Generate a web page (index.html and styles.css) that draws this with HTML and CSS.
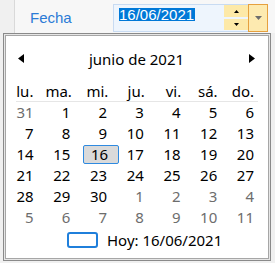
FILE: index.html
```html
<!DOCTYPE html>
<html lang="es">
<head>
<meta charset="utf-8">
<link rel="stylesheet" href="styles.css">
</head>
<body>
<div class="page">
  <div class="topbar">
    <span class="label">Fecha</span>
    <div class="picker">
      <span class="value">16/06/2021</span>
      <div class="spin">
        <div class="spin-btn"><svg width="5" height="3" viewBox="0 0 5 3"><path d="M0 3 L2.5 0 L5 3 Z" fill="#000"/></svg></div>
        <div class="spin-btn"><svg width="5" height="3" viewBox="0 0 5 3"><path d="M0 0 L5 0 L2.5 3 Z" fill="#000"/></svg></div>
      </div>
      <div class="drop"><svg width="7" height="4" viewBox="0 0 7 4"><path d="M0 0 L7 0 L3.5 4 Z" fill="#6d6d6d"/></svg></div>
    </div>
  </div>
  <div class="popup">
    <div class="inner">
      <div class="header">
        <svg class="arrow" width="6" height="9" viewBox="0 0 6 9"><path d="M6 0 L6 9 L0 4.5 Z" fill="#000"/></svg>
        <span class="title">junio de 2021</span>
        <svg class="arrow" width="6" height="9" viewBox="0 0 6 9"><path d="M0 0 L0 9 L6 4.5 Z" fill="#000"/></svg>
      </div>
      <div class="grid names">
        <span class="cell">lu.</span><span class="cell">ma.</span><span class="cell">mi.</span><span class="cell">ju.</span><span class="cell">vi.</span><span class="cell">sá.</span><span class="cell">do.</span>
      </div>
      <div class="sep"></div>
      <div class="grid days">
        <span class="cell other">31</span><span class="cell">1</span><span class="cell">2</span><span class="cell">3</span><span class="cell">4</span><span class="cell">5</span><span class="cell">6</span>
        <span class="cell">7</span><span class="cell">8</span><span class="cell">9</span><span class="cell">10</span><span class="cell">11</span><span class="cell">12</span><span class="cell">13</span>
        <span class="cell">14</span><span class="cell">15</span><span class="cell selected">16</span><span class="cell">17</span><span class="cell">18</span><span class="cell">19</span><span class="cell">20</span>
        <span class="cell">21</span><span class="cell">22</span><span class="cell">23</span><span class="cell">24</span><span class="cell">25</span><span class="cell">26</span><span class="cell">27</span>
        <span class="cell">28</span><span class="cell">29</span><span class="cell">30</span><span class="cell other">1</span><span class="cell other">2</span><span class="cell other">3</span><span class="cell other">4</span>
        <span class="cell other">5</span><span class="cell other">6</span><span class="cell other">7</span><span class="cell other">8</span><span class="cell other">9</span><span class="cell other">10</span><span class="cell other">11</span>
      </div>
      <div class="today">
        <span class="today-box"></span>
        <span class="today-text">Hoy: 16/06/2021</span>
      </div>
    </div>
  </div>
</div>
</body>
</html>
```

FILE: styles.css
```css
* { box-sizing: border-box; }
html, body { margin: 0; padding: 0; }
body {
  width: 275px;
  height: 263px;
  overflow: hidden;
  background: #f0f0f0;
  font-family: "Noto Sans", sans-serif;
  color: #000;
}
.page { height: 263px; }

.topbar {
  height: 33px;
  margin-left: 14px;
  border-left: 1px solid #d9d9d9;
  background: #f7f7f7;
  display: flex;
  align-items: flex-start;
}
.label {
  width: 98px;
  padding-left: 15px;
  margin-top: 9px;
  font-family: "Liberation Sans", Arial, sans-serif;
  font-size: 15px;
  line-height: 17px;
  color: #2b7bd6;
}
.picker {
  margin-top: 4px;
  width: 155px;
  height: 28px;
  border: 1px solid #c8dbf2;
  background: #eef5fd;
  display: flex;
  align-items: flex-start;
}
.value {
  margin-left: 5px;
  margin-top: 3px;
  height: 13px;
  line-height: 13px;
  padding-right: 1px;
  background: #0078d7;
  color: #fff;
  font-family: "Liberation Sans", Arial, sans-serif;
  font-size: 15px;
}
.spin {
  margin-left: auto;
  width: 24px;
  display: flex;
  flex-direction: column;
  gap: 2px;
}
.spin-btn {
  height: 12px;
  background: #fde9a8;
  display: flex;
  align-items: center;
  justify-content: center;
}
.spin-btn + .spin-btn { height: 11px; }
.drop {
  width: 20px;
  height: 28px;
  margin: -1px -1px 0 0;
  border: 1px solid #e6a03e;
  background: #fdeab0;
  display: flex;
  align-items: center;
  justify-content: center;
}

.popup {
  margin-left: 3px;
  width: 268px;
  height: 228px;
  border: 1px solid #8a8a8a;
  padding: 1px;
  background: #e6e6e6;
}
.inner {
  height: 100%;
  border: 1px solid #a6a6a6;
  background: #fff;
}
.header {
  display: flex;
  align-items: center;
  justify-content: space-between;
  padding: 14px 13px 0 12px;
  height: 45px;
}
.title {
  font-size: 15px;
  line-height: 20px;
  margin-top: -14px;
}
.header .arrow { margin-top: -14px; }

.grid {
  display: grid;
  grid-template-columns: repeat(7, 1fr);
  width: 257px;
  margin-left: 3px;
}
.names {
  font-size: 15px;
  line-height: 20px;
}
.cell {
  text-align: right;
  padding-right: 12px;
}
.sep {
  height: 1px;
  background: #e6e6e6;
  margin: 0 10px 0 10px;
}
.days {
  font-size: 15px;
  line-height: 21px;
}
.days .cell { height: 21px; }
.other { color: #6d6d6d; }
.selected {
  margin: 1px 0 1px 1px;
  height: 19px !important;
  line-height: 17px;
  padding-right: 10px;
  background: #dadada;
  border: 1px solid #2f8ae0;
  border-radius: 2px;
}
.today {
  display: flex;
  align-items: center;
  margin-top: 3px;
  padding-left: 61px;
}
.today-box {
  width: 31px;
  height: 16px;
  border: 2px solid #1f7fdb;
  border-radius: 3px;
}
.today-text {
  margin-left: 9px;
  font-size: 15px;
  line-height: 18px;
}
```
